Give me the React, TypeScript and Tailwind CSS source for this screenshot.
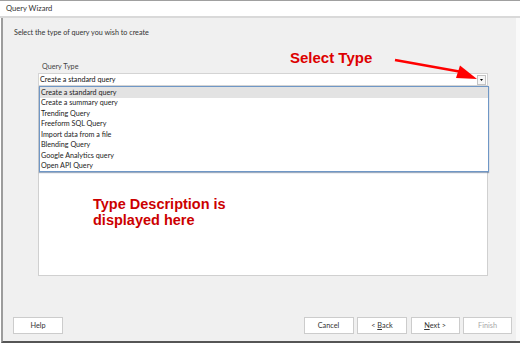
import React from "react";

const ui = { fontFamily: '"Segoe UI", Lato, "Liberation Sans", sans-serif' };
const arial = { fontFamily: '"Liberation Sans", Arial, sans-serif' };

const items = [
  "Create a standard query",
  "Create a summary query",
  "Trending Query",
  "Freeform SQL Query",
  "Import data from a file",
  "Blending Query",
  "Google Analytics query",
  "Open API Query",
];

function Btn({ children, w, disabled }: { children: React.ReactNode; w: string; disabled?: boolean }) {
  return (
    <div
      className={`${w} h-[17px] bg-white border border-[#cccccc] flex items-center justify-center text-[7.3px] leading-none ${
        disabled ? "text-[#a8a8a8]" : "text-[#333333]"
      }`}
    >
      {children}
    </div>
  );
}

export default function App() {
  return (
    <div className="relative w-[520px] h-[343px] bg-white flex flex-col overflow-hidden" style={ui}>
      {/* title bar */}
      <div className="h-[18px] border-t border-[#a0a0a0] border-b-2 border-b-[#d9d9d9] bg-white flex items-center pl-[6px] text-[7.6px] text-[#333333] shrink-0">
        Query Wizard
      </div>
      {/* body */}
      <div className="flex-1 flex ml-[1px] border-l-2 border-[#9c9c9c] border-b-2 border-b-[#555555]">
        <div className="flex-1 bg-[#f0f0f0] flex flex-col">
          <div className="mt-[10px] pl-[11px] h-[10px] text-[7.2px] leading-[10px] text-[#333333]">
            Select the type of query you wish to create
          </div>
          <div className="mt-[24px] pl-[39px] h-[10px] text-[7.2px] leading-[10px] text-[#444444]">Query Type</div>
          <div className="mt-[1px] ml-[35px] w-[450px] h-[13px] bg-white border border-[#d4d4d4] flex items-center justify-between pl-[1px] pr-[1px]">
            <span className="text-[7.2px] leading-none text-[#111111]">Create a standard query</span>
            <div className="w-[9px] h-[10px] bg-[#f7f7f7] border border-[#c4c4c4] flex items-center justify-center">
              <svg width="3" height="2" viewBox="0 0 3 2">
                <polygon points="0,0 3,0 1.5,2" fill="#000" />
              </svg>
            </div>
          </div>
          <div className="relative ml-[35px] w-[450px] h-[190px] bg-white border border-[#d0d0d0] border-t-0">
            <div
              className="pt-[110px] pl-[54px] text-[14.5px] leading-[16px] font-bold text-[#cc0000]"
              style={arial}
            >
              <div>Type Description is</div>
              <div>displayed here</div>
            </div>
            {/* dropdown list overlay */}
            <div className="absolute left-0 top-0 w-[450px] bg-white border border-[#6f97c6] shadow-[0_1px_1px_rgba(60,90,130,0.5)]">
              {items.map((t, i) => (
                <div
                  key={t}
                  className={`h-[10.5px] flex items-center pl-[1px] text-[7.2px] leading-none text-[#222222] ${
                    i === 0 ? "bg-[#e3e3e3]" : ""
                  }`}
                >
                  {t}
                </div>
              ))}
            </div>
          </div>
          <div className="mt-[41px] flex items-start pl-[10px] pr-[4px]">
            <Btn w="w-[50px]">Help</Btn>
            <div className="flex-1" />
            <div className="flex gap-[3.5px]">
              <Btn w="w-[50px]">Cancel</Btn>
              <Btn w="w-[50px]">
                &lt;&nbsp;<span className="underline">B</span>ack
              </Btn>
              <Btn w="w-[49px]">
                <span className="underline">N</span>ext&nbsp;&gt;
              </Btn>
              <Btn w="w-[49px]" disabled>
                Finish
              </Btn>
            </div>
          </div>
        </div>
        <div className="w-[4px] bg-[#fafafa]" />
      </div>

      {/* annotations */}
      <div
        className="absolute left-[290px] top-[49px] text-[15px] leading-[18px] font-bold text-[#dd0000] whitespace-nowrap"
        style={arial}
      >
        Select Type
      </div>
      <svg className="absolute left-0 top-0 pointer-events-none" width="520" height="343" viewBox="0 0 520 343">
        <line x1="395" y1="60" x2="462" y2="72" stroke="#ff0000" strokeWidth="2.5" />
        <polygon points="477,79 460,65.5 456,78" fill="#ff0000" />
      </svg>
    </div>
  );
}
